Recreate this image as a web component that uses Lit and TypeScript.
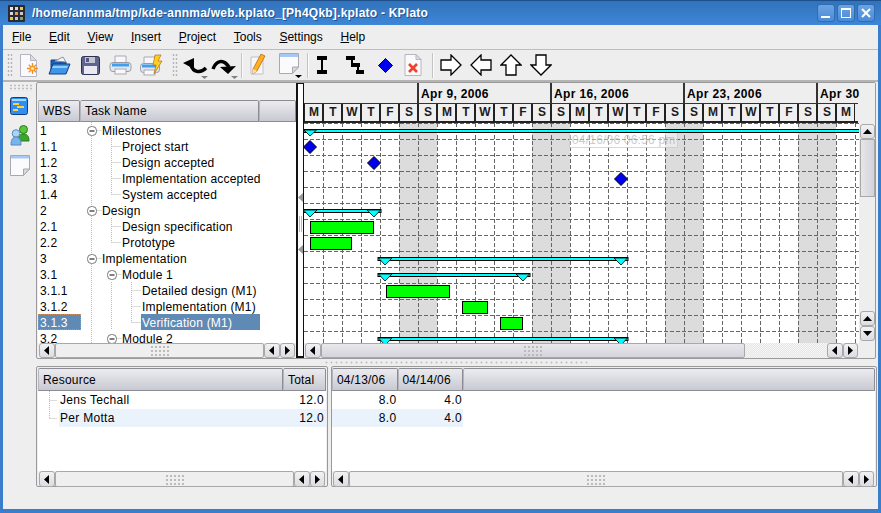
import { LitElement, html, css, svg } from "lit";
import { customElement } from "lit/decorators.js";

type TaskRow = { wbs: string; name: string; level: number; exp?: boolean; last?: boolean; sel?: boolean };

const TASKS: TaskRow[] = [
  { wbs: "1", name: "Milestones", level: 1, exp: true },
  { wbs: "1.1", name: "Project start", level: 2 },
  { wbs: "1.2", name: "Design accepted", level: 2 },
  { wbs: "1.3", name: "Implementation accepted", level: 2 },
  { wbs: "1.4", name: "System accepted", level: 2, last: true },
  { wbs: "2", name: "Design", level: 1, exp: true },
  { wbs: "2.1", name: "Design specification", level: 2 },
  { wbs: "2.2", name: "Prototype", level: 2, last: true },
  { wbs: "3", name: "Implementation", level: 1, exp: true },
  { wbs: "3.1", name: "Module 1", level: 2, exp: true },
  { wbs: "3.1.1", name: "Detailed design (M1)", level: 3 },
  { wbs: "3.1.2", name: "Implementation (M1)", level: 3 },
  { wbs: "3.1.3", name: "Verification (M1)", level: 3, last: true, sel: true },
  { wbs: "3.2", name: "Module 2", level: 2, exp: true },
];

const MENU = ["File", "Edit", "View", "Insert", "Project", "Tools", "Settings", "Help"];
const WEEK = ["M", "T", "W", "T", "F", "S", "S"];
const DAYS = Array.from({ length: 29 }, (_, i) => WEEK[i % 7]);
const MONTHS = ["", "Apr 9, 2006", "Apr 16, 2006", "Apr 23, 2006", "Apr 30"];

const arrow = (d: string) => html`<svg class="arr" width="7" height="9" viewBox="0 0 7 9">
  ${d === "l" ? svg`<polygon points="6,0 6,9 1,4.5" />` : ""}
  ${d === "r" ? svg`<polygon points="1,0 1,9 6,4.5" />` : ""}
</svg>`;

const vArrow = (d: string) => html`<svg class="arr" width="9" height="7" viewBox="0 0 9 7">
  ${d === "u" ? svg`<polygon points="0,6 9,6 4.5,1" />` : svg`<polygon points="0,1 9,1 4.5,6" />`}
</svg>`;

const outlineArrow = (points: string) => html`<svg width="22" height="22" viewBox="0 0 22 22">
  <polygon points=${points} fill="#fff" stroke="#000" stroke-width="1.3" />
</svg>`;

const ICONS = {
  newDoc: html`<svg width="20" height="23" viewBox="0 0 20 23">
    <path d="M1.5 .5h10l6 6v16h-16z" fill="#fafafd" stroke="#b5b5c0" />
    <path d="M11.5 .5v6h6z" fill="#dcdce6" stroke="#b5b5c0" />
    <circle cx="13.5" cy="14.5" r="3" fill="#ffc030" />
    <path d="M13.5 9v11M8 14.5h11M9.8 10.8l7.4 7.4M17.2 10.8l-7.4 7.4" stroke="#f09020" stroke-width="1.3" />
    <circle cx="13.5" cy="14.5" r="1.6" fill="#ffe9a0" />
  </svg>`,
  open: html`<svg width="23" height="21" viewBox="0 0 23 21">
    <path d="M3 18V5h6l2 2h7v11z" fill="#1f5fb8" stroke="#12407f" />
    <path d="M7 6l8-4 3 5z" fill="#f4f4fa" stroke="#8890a8" />
    <path d="M1 19l4-10h17l-4 10z" fill="#3f95ea" stroke="#12407f" />
    <path d="M5 11h15l-1 2H4z" fill="#8fd0fb" />
  </svg>`,
  save: html`<svg width="19" height="19" viewBox="0 0 19 19">
    <rect x=".5" y=".5" width="18" height="18" rx="2" fill="#5f6390" stroke="#2c2f4e" />
    <rect x="4" y="1" width="10" height="6" fill="#c4c6d6" />
    <rect x="5" y="2" width="3" height="4" fill="#53577f" />
    <rect x="3" y="10" width="13" height="8" fill="#e9e9f2" />
  </svg>`,
  print: html`<svg width="23" height="20" viewBox="0 0 23 20">
    <path d="M6 1h11v7H6z" fill="#f8f8fb" stroke="#a8a8b4" />
    <rect x="1" y="7.5" width="21" height="9" rx="3" fill="#e6e6ec" stroke="#9a9aa4" />
    <rect x="3" y="8.5" width="17" height="3" fill="#3f9ff0" />
    <rect x="6" y="14" width="11" height="5" fill="#f8f8fb" stroke="#a8a8b4" />
  </svg>`,
  quick: html`<svg width="23" height="22" viewBox="0 0 23 22">
    <path d="M4 3h11v7H4z" fill="#f8f8fb" stroke="#a8a8b4" />
    <rect x=".5" y="9.5" width="19" height="9" rx="3" fill="#e6e6ec" stroke="#9a9aa4" />
    <rect x="2" y="10.5" width="15" height="3" fill="#3f9ff0" />
    <rect x="4" y="16" width="11" height="5" fill="#f8f8fb" stroke="#a8a8b4" />
    <path d="M15 1h6l-3 6h4l-8 13 2-9h-3z" fill="#ffcc20" stroke="#b07010" stroke-width=".7" />
  </svg>`,
  undo: html`<svg width="27" height="28" viewBox="0 0 27 28">
    <polygon points="2,12 13,7 13,18" fill="#000" />
    <path d="M10 14c2 7 9 9 15 3" stroke="#000" stroke-width="3.500" fill="none" />
    <polygon points="20,25 27,25 23.500,28" fill="#808080" />
  </svg>`,
  redo: html`<svg width="27" height="28" viewBox="0 0 27 28">
    <path d="M2 18C5 10 12 7 18 16" stroke="#000" stroke-width="3.500" fill="none" />
    <polygon points="9,16 25,15 17,23" fill="#000" />
    <polygon points="20,25 27,25 23.500,28" fill="#808080" />
  </svg>`,
  pencil: html`<svg width="16" height="22" viewBox="0 0 16 22">
    <path d="M1 3h12v17H1z" fill="#f7f7fa" stroke="#c0c0c8" />
    <path d="M11 0l4 2-8 15-4 3 0-5z" fill="#ffb020" stroke="#b86a10" stroke-width=".8" />
    <path d="M3 15l4 2-4 3z" fill="#f8e0b0" />
  </svg>`,
  page: html`<svg width="25" height="26" viewBox="0 0 25 26">
    <path d="M1.500 1.500h19V15l-6 6.500h-13z" fill="#fbfbfe" stroke="#a9a9b4" />
    <path d="M2 2h18v3H2z" fill="#a8c8f4" />
    <path d="M14.500 21.500V15h6z" fill="#d8d8de" stroke="#a9a9b4" />
    <polygon points="17,23 24,23 20.500,26" fill="#000" />
  </svg>`,
  task: html`<svg width="10" height="18" viewBox="0 0 10 18">
    <rect y="0" width="10" height="4" /><rect x="4" y="3" width="2" height="12" /><rect y="14" width="10" height="4" />
  </svg>`,
  sub: html`<svg width="18" height="18" viewBox="0 0 18 18">
    <rect x="0" y="0" width="9" height="4" /><rect x="5" y="2" width="2" height="6" /><rect x="5" y="7" width="9" height="4" />
    <rect x="11" y="9" width="2" height="6" /><rect x="10" y="14" width="8" height="4" />
  </svg>`,
  mile: html`<svg width="15" height="15" viewBox="0 0 15 15">
    <polygon points="7.500,.5 14.500,7.500 7.500,14.500 .5,7.500" fill="#0000f0" stroke="#000" />
  </svg>`,
  del: html`<svg width="18" height="22" viewBox="0 0 18 22">
    <path d="M1 .5h11l5 5v16H1z" fill="#fafafd" stroke="#b5b5c0" />
    <path d="M12 .5v5h5z" fill="#dde" stroke="#b5b5c0" />
    <path d="M5 10l8 8M13 10l-8 8" stroke="#f04030" stroke-width="2.600" />
  </svg>`,
  right: outlineArrow("1,6 11,6 11,1 21,11 11,21 11,16 1,16"),
  left: outlineArrow("21,6 11,6 11,1 1,11 11,21 11,16 21,16"),
  up: outlineArrow("6,21 6,11 1,11 11,1 21,11 16,11 16,21"),
  down: outlineArrow("6,1 6,11 1,11 11,21 21,11 16,11 16,1"),
  gantt: html`<svg width="18" height="18" viewBox="0 0 18 18">
    <rect x=".5" y=".5" width="17" height="17" rx="2" fill="#2f8ff0" stroke="#123c88" />
    <rect x="2" y="2" width="14" height="2" fill="#a8d8ff" />
    <rect x="3" y="6" width="6" height="2" fill="#ffd040" /><rect x="7" y="9" width="7" height="2" fill="#ffd040" />
    <rect x="3" y="12" width="5" height="2" fill="#ffd040" />
  </svg>`,
  people: html`<svg width="20" height="21" viewBox="0 0 20 21">
    <circle cx="13.500" cy="4.500" r="4" fill="#58c838" stroke="#2a7a20" />
    <path d="M8 16c0-5 2-7 5.500-7S19 11 19 16z" fill="#38a828" stroke="#2a7a20" />
    <circle cx="6" cy="8.500" r="3.800" fill="#a8d4f8" stroke="#5a88b8" />
    <path d="M1 20c0-5 1.500-8 5-8s5 3 5 8z" fill="#78b4ec" stroke="#5a88b8" />
  </svg>`,
  note: html`<svg width="20" height="21" viewBox="0 0 20 21">
    <path d="M.5 .5h19V14l-6 6.500H.5z" fill="#fbfbfe" stroke="#a8a8b0" />
    <path d="M1 1h18v2.500H1z" fill="#a8c8f4" />
    <path d="M13.500 20.500V14h6z" fill="#d8d8de" stroke="#a8a8b0" />
  </svg>`,
};

const TOOLS: [string, keyof typeof ICONS | "grip" | "sep"][] = [
  ["s-grip0", "grip"],
  ["s305", "newDoc"], ["s305", "open"], ["s305", "save"], ["s305", "print"], ["s305", "quick"],
  ["s-grip1", "grip"],
  ["s30", "undo"], ["s30", "redo"],
  ["s-sep0", "sep"],
  ["s30", "pencil"],
  ["s34", "page"],
  ["s-sep1", "sep"],
  ["s26", "task"], ["s40", "sub"], ["s20", "mile"], ["s36", "del"],
  ["s-sep2", "sep"],
  ["s30", "right"], ["s30", "left"], ["s30", "up"], ["s30", "down"],
];

// one row of tree guides, x is relative to the start of the task column (81)
const guides = (r: TaskRow) => {
  const branchX = r.level === 2 ? 30.5 : 50.5;
  return svg`
    <line class="dot" x1="10.500" y1="0" x2="10.500" y2="16" />
    ${r.level === 3 ? svg`<line class="dot" x1="30.500" y1="0" x2="30.500" y2="16" />` : ""}
    ${r.level > 1 && !r.exp ? svg`
      <line class="dot" x1=${branchX} y1="0" x2=${branchX} y2=${r.last ? 8.5 : 16} />
      <line class="dot" x1=${branchX} y1="8.500" x2=${branchX + 9} y2="8.500" />` : ""}
    ${r.exp ? svg`
      <line class="dot" x1=${(r.level === 1 ? 10.5 : 30.5) + 5} y1="8.500" x2=${(r.level === 1 ? 10.5 : 30.5) + 10} y2="8.500" />
      <g transform="translate(${r.level === 1 ? 6 : 26} 4)">
        <rect x=".5" y=".5" width="9" height="9" rx="4" fill="#fff" stroke="#777" />
        <line x1="2.500" y1="5" x2="7.500" y2="5" stroke="#000" />
      </g>` : ""}`;
};

const summary = (x1: number, x2: number, y: number) => svg`
  <rect x=${x1} y=${y + 0.5} width=${x2 - x1} height="3" fill="#00ffff" stroke="#000" />
  <polygon points="${x1 + 0.5},${y + 1} ${x1 + 14},${y + 1} ${x1 + 7},${y + 8}" fill="#00ffff" stroke="#000" stroke-width=".8" />
  <polygon points="${x2 - 14},${y + 1} ${x2 - 0.5},${y + 1} ${x2 - 7},${y + 8}" fill="#00ffff" stroke="#000" stroke-width=".8" />`;

const diamond = (x: number, y: number) => svg`
  <polygon points="${x},${y - 6.5} ${x + 6.5},${y} ${x},${y + 6.5} ${x - 6.5},${y}" fill="#0000f0" stroke="#000" />`;

const bar = (x1: number, x2: number, y: number) => svg`
  <rect x=${x1 + 0.5} y=${y + 0.5} width=${x2 - x1} height="12" fill="#00ff00" stroke="#000" />`;

@customElement("app-root")
export class AppRoot extends LitElement {
  static styles = css`
    :host {
      display: flex;
      flex-direction: column;
      width: 881px;
      height: 513px;
      overflow: hidden;
      background: #eeeeee;
      color: #000;
      font: 12px "Liberation Sans", Arial, sans-serif;
    }
    .title {
      flex: none;
      height: 25px;
      box-sizing: border-box;
      display: flex;
      align-items: center;
      padding: 0 6px 0 8px;
      gap: 2px;
      border-top: 1px solid #1d4f8c;
      background: linear-gradient(#3273ba, #3d86d8);
      color: #fff;
      font-weight: bold;
      font-size: 12px;
      letter-spacing: 0.23px;
      white-space: nowrap;
    }
    .title-text { flex: 1; margin-left: 5px; text-shadow: 1px 1px 0 #20508c; }
    .title-icon { flex: none; }
    .wbtn {
      width: 18px;
      height: 18px;
      box-sizing: border-box;
      border: 1px solid #2f6cb0;
      border-radius: 3px;
      background: linear-gradient(#6ca4e2, #4a8cd8);
      display: flex;
      align-items: center;
      justify-content: center;
    }
    .client {
      flex: 1;
      min-height: 0;
      display: flex;
      flex-direction: column;
      border: solid #3a7dcb;
      border-width: 0 3px 4px;
    }
    .menu {
      flex: none;
      height: 25px;
      box-sizing: border-box;
      display: flex;
      align-items: center;
      border-bottom: 1px solid #bdbdbd;
      padding-left: 9px;
      gap: 17.7px;
    }
    .toolbar {
      flex: none;
      height: 32px;
      box-sizing: border-box;
      display: flex;
      align-items: center;
      border-bottom: 2px solid #b4b4b4;
      padding-left: 4px;
    }
    .slot { flex: none; height: 24px; display: flex; align-items: center; justify-content: center; }
    .s305 { width: 30.5px; }
    .s30 { width: 30px; }
    .s34 { width: 34px; }
    .s26 { width: 26px; }
    .s40 { width: 40px; }
    .s20 { width: 20px; }
    .s36 { width: 36px; }
    .grip {
      height: 24px;
      width: 6px;
      background: radial-gradient(circle, #b4b4b4 0.8px, transparent 1.2px) 0 0 / 3px 4px;
    }
    .s-grip0 { margin-right: 1px; }
    .s-grip1 { margin: 0 1px 0 5.5px; }
    .sep { width: 1px; height: 25px; background: #c4c4c4; border-right: 1px solid #fafafa; }
    .s-sep0 { margin: 0 0 0 2px; }
    .s-sep1 { margin: 0; }
    .s-sep2 { margin: 0 2px 0 1px; }

    .work { flex: 1; min-height: 0; display: flex; letter-spacing: 0.2px; }
    .side {
      flex: none;
      width: 33px;
      box-sizing: border-box;
      padding: 2px 0 0 6px;
      display: flex;
      flex-direction: column;
    }
    .side-grip {
      width: 24px;
      height: 7px;
      background: radial-gradient(circle, #bbb 0.8px, transparent 1.2px) 0 0 / 4px 3px;
    }
    .side-a { height: 18px; margin: 6px 0 0 1px; }
    .side-b { height: 21px; margin: 10px 0 0 1px; }
    .side-c { height: 21px; margin: 9px 0 0 1px; }
    .main {
      flex: 1;
      min-width: 0;
      margin-right: 1px;
      display: flex;
      flex-direction: column;
    }
    .frame {
      box-sizing: border-box;
      border: 1px solid #9a9a9a;
      border-radius: 2px;
      display: flex;
      background: #eee;
    }
    .top { flex: none; height: 277px; margin-right: 1px; }
    .tasks { flex: none; width: 259px; display: flex; flex-direction: column; }
    .task-strip { flex: none; height: 17px; }
    .hdr { display: flex; flex: none; height: 22px; box-sizing: border-box; }
    .hcell {
      box-sizing: border-box;
      height: 100%;
      display: flex;
      align-items: center;
      padding-left: 4px;
      border: 1px solid #8c8c94;
      border-left-color: #b4b4bc;
      background: linear-gradient(#ebebef, #c9c9d3);
      border-radius: 2px 2px 0 0;
      white-space: nowrap;
    }
    .hdr-tasks { margin-left: 1px; }
    .w-wbs { width: 42px; }
    .w-name { width: 179px; }
    .w-rest { flex: 1; }
    .task-body { flex: none; height: 221px; overflow: hidden; background: #fff; margin-left: 1px; }
    .trow { display: flex; height: 16px; white-space: nowrap; line-height: 18px; }
    .wbs { flex: none; width: 43px; box-sizing: border-box; padding-left: 2px; }
    .wbs.sel { background: #5f8ab5; color: #fff; outline: 1px dotted #c89060; outline-offset: -1px; }
    .tree { flex: none; width: 60px; height: 16px; }
    .dot { stroke: #b8b8b8; stroke-dasharray: 1 1; }
    .tname { flex: none; width: 179px; display: flex; }
    .label { padding-left: 1px; }
    .l1 { margin-left: -40px; }
    .l2 { margin-left: -20px; }
    .l3 { margin-left: 0; }
    .label.sel { background: #5f8ab5; color: #fff; flex: 1; }
    .split-v {
      flex: none;
      width: 8px;
      box-sizing: border-box;
      height: 275px;
      border: 2px solid #111;
      border-width: 1px 1px 2px 2px;
      background: #fdfdfd;
      display: flex;
      flex-direction: column;
      align-items: center;
    }
    .split-a { margin-top: 107px; }
    .split-g { margin-top: 11px; width: 3px; height: 16px; border: solid #bbb; border-width: 0 1px; box-sizing: border-box; }
    .split-b { margin-top: 11px; }
    .gantt { flex: 1; min-width: 0; display: flex; flex-direction: column; }
    .months { flex: none; display: flex; height: 20px; box-sizing: border-box; background: #eee; }
    .mon {
      flex: none;
      box-sizing: border-box;
      width: 133px;
      height: 20px;
      border-right: 2px solid #333;
      font-weight: bold;
      padding: 4px 0 0 2px;
      letter-spacing: 0.35px;
      white-space: nowrap;
    }
    .mon:first-child { width: 115px; }
    .mon:last-child { width: 40px; border: 0; }
    .dayrow {
      flex: none;
      display: flex;
      height: 20px;
      width: 554px;
      box-sizing: border-box;
      border-top: 1px solid #333;
      border-bottom: 2px solid #222;
      letter-spacing: 0;
    }
    .day {
      flex: none;
      width: 19px;
      box-sizing: border-box;
      border-left: 1px solid #222;
      border-right: 1px solid #222;
      background: #efefef;
      color: #1c1c1c;
      font-weight: bold;
      text-align: center;
      line-height: 17px;
      padding-left: 1px;
    }
    .chart-row { flex: none; display: flex; height: 220px; }
    .chart { display: block; flex: none; }
    .chart .grid { stroke: #666; stroke-dasharray: 4 2; }
    .ghost { font: 12px "Liberation Sans", Arial, sans-serif; fill: #bbb; }
    .vbar {
      flex: none;
      width: 17px;
      box-sizing: border-box;
      padding: 1px 1px 2px 1px;
      display: flex;
      flex-direction: column;
    }
    .vbtn, .sbtn {
      box-sizing: border-box;
      flex: none;
      border: 1px solid #a8a8a8;
      border-radius: 3px;
      background: linear-gradient(#f2f2f4, #dcdce2);
      display: flex;
      align-items: center;
      justify-content: center;
    }
    .vbtn { height: 15px; }
    .vthumb {
      flex: none;
      height: 58px;
      box-sizing: border-box;
      border: 1px solid #a8a8a8;
      background: linear-gradient(90deg, #e6e6ea, #d2d2da);
    }
    .vtrough { flex: 1; }
    .arr { fill: #000; display: block; }
    .hbar { flex: none; height: 15px; display: flex; }
    .sbtn { width: 15.5px; }
    .thumb {
      flex: 1;
      min-width: 0;
      box-sizing: border-box;
      border: 1px solid #a8a8a8;
      border-radius: 2px;
      background: #efefef;
      display: flex;
      align-items: center;
      justify-content: center;
    }
    .thumb.on { background: linear-gradient(#e8e8ec, #d4d4dc); }
    .thumb.fixed { flex: none; width: 424px; }
    .checker {
      flex: 1;
      background: repeating-conic-gradient(#e6e6e6 0 25%, #f6f6f6 0 50%) 0 0 / 2px 2px;
    }
    .dots {
      width: 19px;
      height: 11px;
      background: radial-gradient(circle, #bbb 0.8px, transparent 1.2px) 0 0 / 4px 4px;
    }
    .hbar-tasks { margin: 0 1px 0 2px; }
    .hbar-gantt { margin: 0 17px 0 1px; }
    .hsplit { flex: none; height: 7px; display: flex; justify-content: center; }
    .hsplit div {
      width: 265px;
      height: 3px;
      margin-top: 2px;
      background: radial-gradient(circle, #c0c0c0 0.8px, transparent 1.2px) 0 0 / 5px 3px;
    }
    .bottom { flex: none; height: 121px; display: flex; gap: 3px; }
    .pane { flex-direction: column; padding: 1px 1px 0 1px; }
    .pane-l { flex: none; width: 292px; }
    .pane-r { flex: 1; min-width: 0; padding-left: 0; }
    .pane .hdr { height: 23px; }
    .pane-body { flex: none; height: 80px; background: #fff; }
    .rrow { display: flex; height: 18px; line-height: 18px; white-space: nowrap; }
    .rtree { flex: none; width: 21px; height: 18px; }
    .rname { flex: 1; padding-left: 1px; letter-spacing: 0.3px; }
    .num { flex: none; text-align: right; box-sizing: border-box; letter-spacing: 0.35px; }
    .num-total { width: 43px; padding-right: 2px; }
    .w-res { flex: 1; }
    .w-total { flex: none; width: 43px; }
    .w-date { flex: none; width: 65.5px; }
    .num-date { width: 65.5px; padding-right: 1px; }
    .alt { background: #eaf3fb; }
    .alt-tail { flex: 1; background: #fff; }
    .hbar-b { margin: 0 1px; height: 16px; }
  `;

  private hbar(cls: string, on: boolean, tail: boolean) {
    return html`<div class="hbar ${cls}">
      <div class="sbtn">${arrow("l")}</div>
      <div class="thumb ${on ? "on" : ""} ${tail ? "fixed" : ""}"><div class="dots"></div></div>
      ${tail ? html`<div class="checker"></div>` : ""}
      <div class="sbtn">${arrow("l")}</div>
      <div class="sbtn">${arrow("r")}</div>
    </div>`;
  }

  private renderChart() {
    const vs = Array.from({ length: 29 }, (_, i) => 323.5 + i * 19);
    const hs = Array.from({ length: 14 }, (_, i) => 124.5 + i * 16);
    return html`<svg class="chart" width="555" height="220" viewBox="304 124 555 220">
      <rect x="304" y="124" width="555" height="220" fill="#fff" />
      ${[399, 532, 665, 798].map(x => svg`<rect x=${x} y="124" width="38" height="220" fill="#dcdcdc" />`)}
      ${hs.map(y => svg`<line class="grid" x1="304" y1=${y} x2="859" y2=${y} />`)}
      ${vs.map(x => svg`<line class="grid" x1=${x} y1="124" x2=${x} y2="344" />`)}
      <g opacity=".75">
        <rect x="569.500" y="132.500" width="108" height="16" fill="#fff" fill-opacity=".55" stroke="#ccc" />
        <text class="ghost" x="572" y="145">04/16/06 06:56 pm</text>
      </g>
      <rect x="304" y="130.500" width="556" height="3" fill="#00ffff" stroke="#000" />
      <polygon points="304,131 316.500,131 310,137" fill="#00ffff" stroke="#000" stroke-width=".8" />
      ${diamond(310, 148)} ${diamond(374, 164)} ${diamond(621, 180)}
      ${summary(303, 381, 210)}
      ${bar(310, 373, 222)} ${bar(310, 351, 238)}
      ${summary(378, 628, 258)}
      ${summary(378, 530, 274)}
      ${bar(386, 449, 286)} ${bar(462, 487, 302)} ${bar(500, 522, 318)}
      ${summary(378, 628, 338)}
    </svg>`;
  }

  render() {
    return html`
      <div class="title">
        <svg class="title-icon" width="17" height="17" viewBox="0 0 17 17">
          <rect width="17" height="17" rx="1" fill="#2a2a36" />
          <rect x="2" y="2" width="3" height="3" fill="#e8e8e8" /><rect x="7" y="2" width="3" height="3" fill="#d8d8d8" />
          <rect x="12" y="2" width="3" height="3" fill="#e8c840" /><rect x="2" y="7" width="3" height="3" fill="#d8d8d8" />
          <rect x="7" y="7" width="3" height="3" fill="#e0a060" /><rect x="12" y="7" width="3" height="3" fill="#c8c8c8" />
          <rect x="2" y="12" width="3" height="3" fill="#e8c840" /><rect x="7" y="12" width="3" height="3" fill="#c8c8c8" />
          <rect x="12" y="12" width="3" height="3" fill="#80a860" />
        </svg>
        <span class="title-text">/home/annma/tmp/kde-annma/web.kplato_[Ph4Qkb].kplato - KPlato</span>
        <div class="wbtn"><svg width="12" height="12" viewBox="0 0 12 12"><rect x="1" y="9" width="9" height="2" fill="#fff" /></svg></div>
        <div class="wbtn"><svg width="12" height="12" viewBox="0 0 12 12"><rect x="1.500" y="1.500" width="9" height="9" fill="none" stroke="#fff" /><rect x="1" y="1" width="10" height="2" fill="#fff" /></svg></div>
        <div class="wbtn"><svg width="12" height="12" viewBox="0 0 12 12"><path d="M2 2l8 8M10 2l-8 8" stroke="#fff" stroke-width="2" /></svg></div>
      </div>
      <div class="client">
        <div class="menu">
          ${MENU.map(m => html`<span><u>${m[0]}</u>${m.slice(1)}</span>`)}
        </div>
        <div class="toolbar">
          ${TOOLS.map(([c, k]) =>
            k === "grip" ? html`<div class="grip ${c}"></div>`
            : k === "sep" ? html`<div class="sep ${c}"></div>`
            : html`<div class="slot ${c}">${ICONS[k]}</div>`)}
        </div>
        <div class="work">
          <div class="side">
            <div class="side-grip"></div>
            <div class="side-a">${ICONS.gantt}</div>
            <div class="side-b">${ICONS.people}</div>
            <div class="side-c">${ICONS.note}</div>
          </div>
          <div class="main">
            <div class="frame top">
              <div class="tasks">
                <div class="task-strip"></div>
                <div class="hdr hdr-tasks">
                  <div class="hcell w-wbs">WBS</div>
                  <div class="hcell w-name">Task Name</div>
                  <div class="hcell w-rest"></div>
                </div>
                <div class="task-body">
                  ${TASKS.map(r => html`<div class="trow">
                    <div class="wbs ${r.sel ? "sel" : ""}">${r.wbs}</div>
                    <div class="tname">
                      <svg class="tree" viewBox="0 0 60 16" width="60" height="16">${guides(r)}</svg>
                      <div class="label l${r.level} ${r.sel ? "sel" : ""}">${r.name}</div>
                    </div>
                  </div>`)}
                </div>
                ${this.hbar("hbar-tasks", false, false)}
              </div>
              <div class="split-v">
                <div class="split-a"><svg width="5" height="9" viewBox="0 0 5 9"><polygon points="5,0 5,9 0,4.500" fill="#999" /></svg></div>
                <div class="split-g"></div>
                <div class="split-b"><svg width="5" height="9" viewBox="0 0 5 9"><polygon points="5,0 5,9 0,4.500" fill="#999" /></svg></div>
              </div>
              <div class="gantt">
                <div class="months">${MONTHS.map(m => html`<div class="mon">${m}</div>`)}</div>
                <div class="dayrow">${DAYS.map(d => html`<div class="day">${d}</div>`)}</div>
                <div class="chart-row">
                  ${this.renderChart()}
                  <div class="vbar">
                    <div class="vbtn">${vArrow("u")}</div>
                    <div class="vthumb"></div>
                    <div class="vtrough"></div>
                    <div class="vbtn">${vArrow("u")}</div>
                    <div class="vbtn">${vArrow("d")}</div>
                  </div>
                </div>
                ${this.hbar("hbar-gantt", true, true)}
              </div>
            </div>
            <div class="hsplit"><div></div></div>
            <div class="bottom">
              <div class="frame pane pane-l">
                <div class="hdr">
                  <div class="hcell w-res">Resource</div>
                  <div class="hcell w-total">Total</div>
                </div>
                <div class="pane-body">
                  <div class="rrow">
                    <svg class="rtree" width="21" height="18" viewBox="0 0 21 18">
                      <line class="dot" x1="11.500" y1="0" x2="11.500" y2="18" /><line class="dot" x1="11.500" y1="9.500" x2="19" y2="9.500" />
                    </svg>
                    <div class="rname">Jens Techall</div>
                    <div class="num num-total">12.0</div>
                  </div>
                  <div class="rrow">
                    <svg class="rtree" width="21" height="18" viewBox="0 0 21 18">
                      <line class="dot" x1="11.500" y1="0" x2="11.500" y2="9.500" /><line class="dot" x1="11.500" y1="9.500" x2="19" y2="9.500" />
                    </svg>
                    <div class="rname alt">Per Motta</div>
                    <div class="num num-total alt">12.0</div>
                  </div>
                </div>
                ${this.hbar("hbar-b", false, false)}
              </div>
              <div class="frame pane pane-r">
                <div class="hdr">
                  <div class="hcell w-date">04/13/06</div>
                  <div class="hcell w-date">04/14/06</div>
                  <div class="hcell w-rest"></div>
                </div>
                <div class="pane-body">
                  <div class="rrow"><div class="num num-date">8.0</div><div class="num num-date">4.0</div></div>
                  <div class="rrow"><div class="num num-date alt">8.0</div><div class="num num-date alt">4.0</div><div class="alt-tail"></div></div>
                </div>
                ${this.hbar("hbar-b", false, false)}
              </div>
            </div>
          </div>
        </div>
      </div>
    `;
  }
}
